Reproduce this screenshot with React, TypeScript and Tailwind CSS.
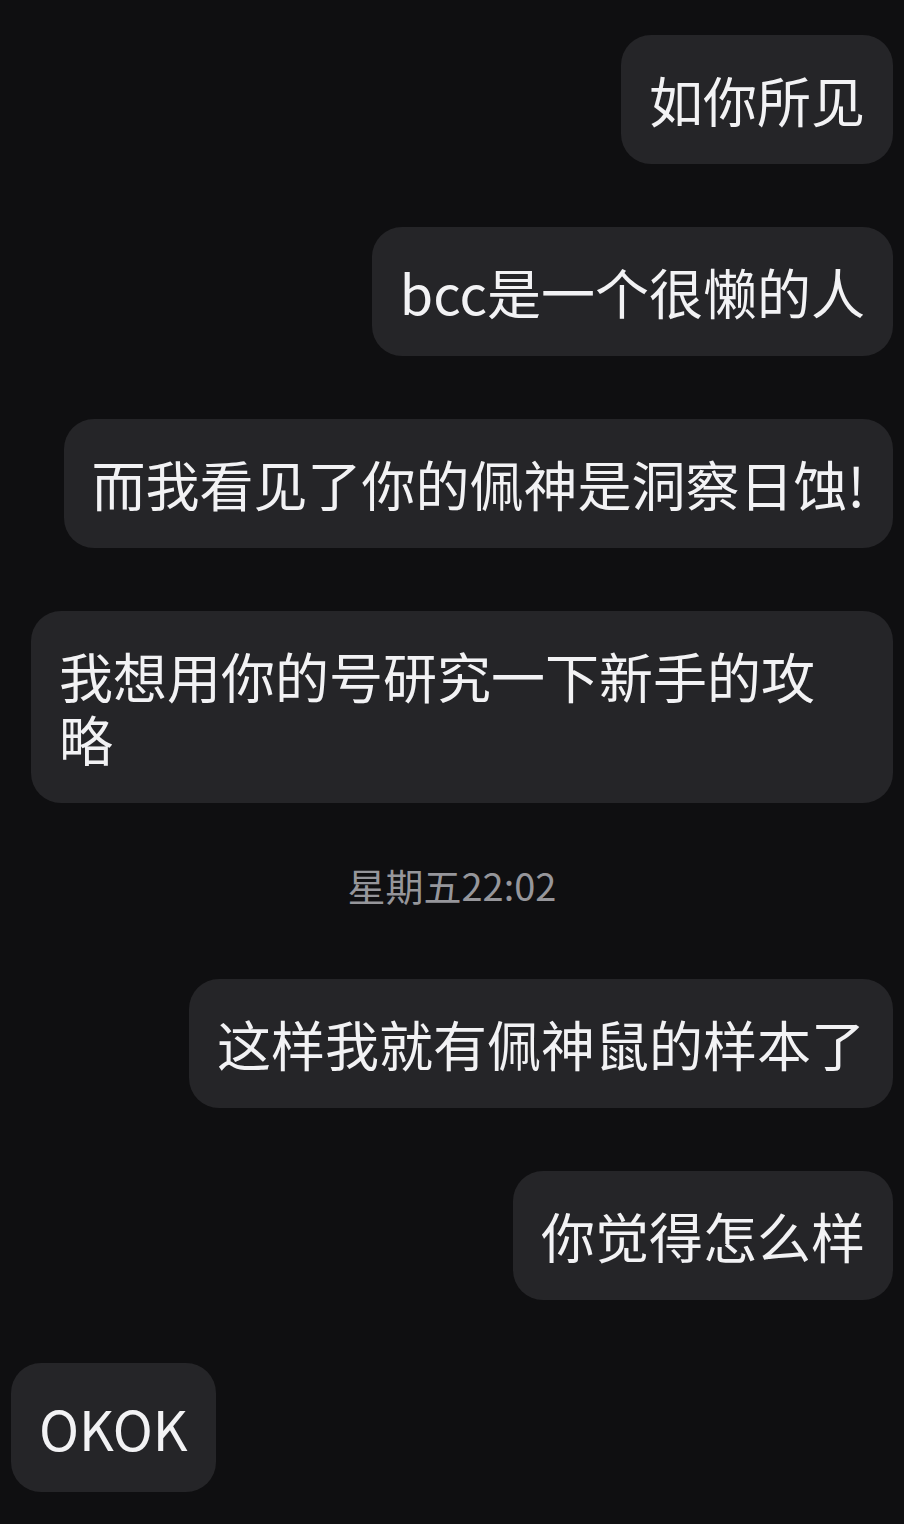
import type React from "react"

type Msg = { side: "left" | "right"; text: string } | { time: string }

const messages: Msg[] = [
  { side: "right", text: "如你所见" },
  { side: "right", text: "bcc是一个很懒的人" },
  { side: "right", text: "而我看见了你的佩神是洞察日蚀!" },
  { side: "right", text: "我想用你的号研究一下新手的攻略" },
  { time: "星期五22:02" },
  { side: "right", text: "这样我就有佩神鼠的样本了" },
  { side: "right", text: "你觉得怎么样" },
  { side: "left", text: "OKOK" },
]

function Bubble({ side, children }: { side: "left" | "right"; children: React.ReactNode }) {
  return (
    <div className={side === "right" ? "flex justify-end" : "flex justify-start"}>
      <div className="max-w-[862px] rounded-[30px] bg-[#252528] px-[28px] py-[33px] text-[54px] leading-[63px] text-[#f2f2f4]">
        {children}
      </div>
    </div>
  )
}

export default function App() {
  return (
    <div
      className="min-h-screen bg-[#0f0f11] px-[11px] pt-[35px] pb-[34px]"
      style={{ fontFamily: '"Noto Sans CJK SC", "Noto Sans", sans-serif' }}
    >
      <div className="flex flex-col gap-[63px]">
        {messages.map((m, i) =>
          "time" in m ? (
            <div key={i} className="pb-[13px] text-center text-[38px] leading-[37px] text-[#96969b]">
              {m.time}
            </div>
          ) : (
            <Bubble key={i} side={m.side}>
              {m.text}
            </Bubble>
          ),
        )}
      </div>
    </div>
  )
}
